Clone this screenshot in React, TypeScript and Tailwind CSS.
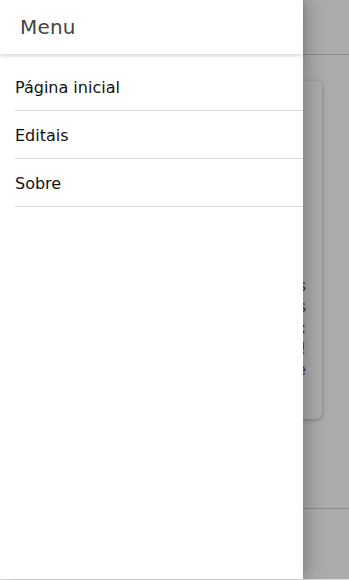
export default function App() {
  const items = ['Página inicial', 'Editais', 'Sobre'];

  return (
    <div className="relative h-[580px] w-full overflow-hidden bg-white font-['DejaVu_Sans',sans-serif]">
      {/* page under the drawer */}
      <div className="flex h-[579px] flex-col">
        <header className="h-[55px] shrink-0 border-b border-[#d0d0d0] bg-white" />
        <main className="flex-1 px-[27px] pt-[26px]">
          <div className="flex h-[338px] flex-col justify-end rounded-md bg-white px-4 pb-[38px] text-right text-[15px] leading-[21px] text-[#555] shadow-[0_1px_4px_rgba(0,0,0,0.3)]">
            <p>Consulte os editais abertos</p>
            <p>e acompanhe os processos</p>
            <p>de seleção disponíveis:</p>
            <p className="text-[#2a6fd0]">Participe!</p>
            <p>e boa sorte</p>
          </div>
        </main>
        <footer className="h-[71px] shrink-0 border-t border-[#cfcfcf] bg-white" />
      </div>
      <div className="h-px bg-[#dedede]" />

      {/* backdrop */}
      <div className="absolute inset-x-0 top-0 bottom-px bg-black/[0.33]" />

      {/* drawer */}
      <nav className="absolute left-0 top-0 bottom-px w-[303px] bg-white shadow-[4px_0_16px_rgba(0,0,0,0.25)]">
        <div className="flex h-[54px] items-center px-5 shadow-[0_2px_4px_rgba(0,0,0,0.16)]">
          <span className="text-[20px] tracking-[0.2px] text-[#444]">Menu</span>
        </div>
        <ul className="pl-[15px] pt-[9px]">
          {items.map((item) => (
            <li key={item} className="flex h-[48px] items-center border-b border-[#dcdcdc] pt-[3px] text-[16px] text-[#111]">
              {item}
            </li>
          ))}
        </ul>
      </nav>
    </div>
  );
}
